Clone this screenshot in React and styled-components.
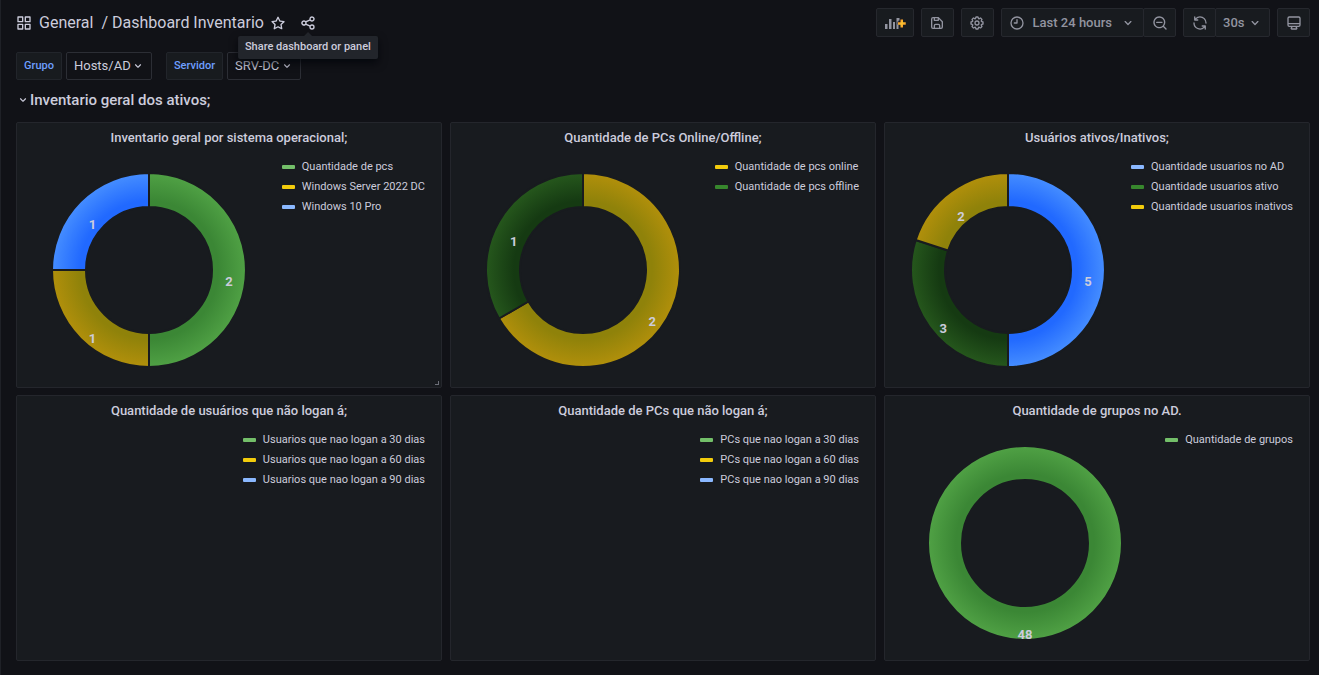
import React from "react";
import styled, { createGlobalStyle } from "styled-components";

const ICONS = {
  apps: "M10,13H3a1,1,0,0,0-1,1v7a1,1,0,0,0,1,1h7a1,1,0,0,0,1-1V14A1,1,0,0,0,10,13ZM9,20H4V15H9ZM21,2H14a1,1,0,0,0-1,1v7a1,1,0,0,0,1,1h7a1,1,0,0,0,1-1V3A1,1,0,0,0,21,2ZM20,9H15V4h5Zm1,4H14a1,1,0,0,0-1,1v7a1,1,0,0,0,1,1h7a1,1,0,0,0,1-1V14A1,1,0,0,0,21,13Zm-1,7H15V15h5ZM10,2H3A1,1,0,0,0,2,3v7a1,1,0,0,0,1,1h7a1,1,0,0,0,1-1V3A1,1,0,0,0,10,2ZM9,9H4V4H9Z",
  angleDown: "M17,9.17a1,1,0,0,0-1.41,0L12,12.71,8.46,9.17a1,1,0,0,0-1.41,0,1,1,0,0,0,0,1.42l4.24,4.24a1,1,0,0,0,1.42,0L17,10.59A1,1,0,0,0,17,9.17Z",
  clock: "M11,11H8a1,1,0,0,0,0,2h4a1,1,0,0,0,1-1V7a1,1,0,0,0-2,0Zm1-9A10,10,0,1,0,22,12,10,10,0,0,0,12,2Zm0,18a8,8,0,1,1,8-8A8,8,0,0,1,12,20Z",
  zoomOut: "M21.71,20.29,18,16.61A9,9,0,1,0,16.61,18l3.68,3.68a1,1,0,0,0,1.42,0A1,1,0,0,0,21.71,20.29ZM11,18a7,7,0,1,1,7-7A7,7,0,0,1,11,18Zm4-8H7a1,1,0,0,0,0,2h8a1,1,0,0,0,0-2Z",
  sync: "M19.91,15.51H15.38a1,1,0,0,0,0,2h2.4A8,8,0,0,1,4,12a1,1,0,0,0-2,0,10,10,0,0,0,16.88,7.23V21a1,1,0,0,0,2,0V16.5A1,1,0,0,0,19.91,15.51ZM12,2A10,10,0,0,0,5.12,4.77V3a1,1,0,0,0-2,0V7.5a1,1,0,0,0,1,1h4.5a1,1,0,0,0,0-2H6.22A8,8,0,0,1,20,12a1,1,0,0,0,2,0A10,10,0,0,0,12,2Z",
  monitor: "M19,2H5A3,3,0,0,0,2,5V15a3,3,0,0,0,3,3H7.64l-.58,1a2,2,0,0,0,0,2,2,2,0,0,0,1.75,1h6.46A2,2,0,0,0,17,21a2,2,0,0,0,0-2l-.59-1H19a3,3,0,0,0,3-3V5A3,3,0,0,0,19,2ZM8.77,20,10,18H14l1.2,2ZM20,15a1,1,0,0,1-1,1H5a1,1,0,0,1-1-1V14H20Zm0-3H4V5A1,1,0,0,1,5,4H19a1,1,0,0,1,1,1Z",
  save: "M20.71,9.29l-6-6a1,1,0,0,0-.32-.21A1.09,1.09,0,0,0,14,3H6A3,3,0,0,0,3,6V18a3,3,0,0,0,3,3H18a3,3,0,0,0,3-3V10A1,1,0,0,0,20.71,9.29ZM9,5h4V7H9Zm6,14H9V16a1,1,0,0,1,1-1h4a1,1,0,0,1,1,1Zm4-1a1,1,0,0,1-1,1H17V16a3,3,0,0,0-3-3H10a3,3,0,0,0-3,3v3H6a1,1,0,0,1-1-1V6A1,1,0,0,1,6,5H7V8A1,1,0,0,0,8,9h6a1,1,0,0,0,1-1V6.41l4,4Z",
  share: "M18,14a4,4,0,0,0-3.08,1.48l-5.1-2.35a3.64,3.64,0,0,0,0-2.26l5.1-2.35A4,4,0,1,0,14,6a4.17,4.17,0,0,0,.07.71L8.79,9.14a4,4,0,1,0,0,5.72l5.28,2.43A4.17,4.17,0,0,0,14,18a4,4,0,1,0,4-4ZM18,4a2,2,0,1,1-2,2A2,2,0,0,1,18,4ZM6,14a2,2,0,1,1,2-2A2,2,0,0,1,6,14Zm12,6a2,2,0,1,1,2-2A2,2,0,0,1,18,20Z",
  star: "M22,9.67A1,1,0,0,0,21.14,9l-5.69-.83L12.9,3a1,1,0,0,0-1.8,0L8.55,8.16,2.86,9a1,1,0,0,0-.81.68,1,1,0,0,0,.25,1l4.13,4-1,5.68A1,1,0,0,0,6.9,21.44L12,18.77l5.1,2.67a.93.93,0,0,0,.46.12,1,1,0,0,0,.59-.19,1,1,0,0,0,.4-1l-1-5.68,4.13-4A1,1,0,0,0,22,9.67Zm-6.15,4a1,1,0,0,0-.29.88l.72,4.2-3.76-2a1.06,1.06,0,0,0-.94,0l-3.76,2,.72-4.2a1,1,0,0,0-.29-.88l-3-3,4.21-.61a1,1,0,0,0,.76-.55L12,5.7l1.88,3.82a1,1,0,0,0,.76.55l4.21.61Z",
  cog: "M21.32,9.55l-1.89-.63.89-1.78A1,1,0,0,0,20.13,6L18,3.87a1,1,0,0,0-1.15-.19l-1.78.89-.63-1.89A1,1,0,0,0,13.5,2h-3a1,1,0,0,0-.95.68L8.92,4.57,7.14,3.68A1,1,0,0,0,6,3.87L3.87,6a1,1,0,0,0-.19,1.15l.89,1.78-1.89.63A1,1,0,0,0,2,10.5v3a1,1,0,0,0,.68.95l1.89.63-.89,1.78A1,1,0,0,0,3.87,18L6,20.13a1,1,0,0,0,1.15.19l1.78-.89.63,1.89a1,1,0,0,0,.95.68h3a1,1,0,0,0,.95-.68l.63-1.89,1.78.89A1,1,0,0,0,18,20.13L20.13,18a1,1,0,0,0,.19-1.15l-.89-1.78,1.89-.63A1,1,0,0,0,22,13.5v-3A1,1,0,0,0,21.32,9.55ZM20,12.78l-1.2.4A2,2,0,0,0,17.64,16l.57,1.14-1.1,1.1L16,17.64a2,2,0,0,0-2.79,1.16l-.4,1.2H11.22l-.4-1.2A2,2,0,0,0,8,17.64l-1.14.57-1.1-1.1L6.36,16A2,2,0,0,0,5.2,13.18L4,12.78V11.22l1.2-.4A2,2,0,0,0,6.36,8L5.79,6.89l1.1-1.1L8,6.36A2,2,0,0,0,10.82,5.2l.4-1.2h1.56l.4,1.2A2,2,0,0,0,16,6.36l1.14-.57,1.1,1.1L17.64,8a2,2,0,0,0,1.16,2.79l1.2.4ZM12,8a4,4,0,1,0,4,4A4,4,0,0,0,12,8Zm0,6a2,2,0,1,1,2-2A2,2,0,0,1,12,14Z",
};

// inner / outer stops of each slice gradient, and the legend colour
const COLORS = {
  green: { inner: "#3b8735", outer: "#4fa044", key: "#73bf69" },
  yellow: { inner: "#8f820a", outer: "#b08f0b", key: "#f2cc0c" },
  blue: { inner: "#2169ff", outer: "#448cff", key: "#8ab8ff" },
  darkGreen: { inner: "#153a12", outer: "#25561c", key: "#37872d" },
};

const PANELS = [
  {
    title: "Inventario geral por sistema operacional;",
    resizable: true,
    items: [
      { label: "Quantidade de pcs", color: "green", value: 2 },
      { label: "Windows Server 2022 DC", color: "yellow", value: 1 },
      { label: "Windows 10 Pro", color: "blue", value: 1 },
    ],
  },
  {
    title: "Quantidade de PCs Online/Offline;",
    items: [
      { label: "Quantidade de pcs online", color: "yellow", value: 2 },
      { label: "Quantidade de pcs offline", color: "darkGreen", value: 1 },
    ],
  },
  {
    title: "Usuários ativos/Inativos;",
    items: [
      { label: "Quantidade usuarios no AD", color: "blue", value: 5 },
      { label: "Quantidade usuarios ativo", color: "darkGreen", value: 3 },
      { label: "Quantidade usuarios inativos", color: "yellow", value: 2 },
    ],
  },
  {
    title: "Quantidade de usuários que não logan á;",
    items: [
      { label: "Usuarios que nao logan a 30 dias", color: "green", value: 0 },
      { label: "Usuarios que nao logan a 60 dias", color: "yellow", value: 0 },
      { label: "Usuarios que nao logan a 90 dias", color: "blue", value: 0 },
    ],
  },
  {
    title: "Quantidade de PCs que não logan á;",
    items: [
      { label: "PCs que nao logan a 30 dias", color: "green", value: 0 },
      { label: "PCs que nao logan a 60 dias", color: "yellow", value: 0 },
      { label: "PCs que nao logan a 90 dias", color: "blue", value: 0 },
    ],
  },
  {
    title: "Quantidade de grupos no AD.",
    items: [{ label: "Quantidade de grupos", color: "green", value: 48 }],
  },
];

const OUTER = 96;
const INNER = 64;

const Icon = ({ name, size = 16 }) => (
  <svg width={size} height={size} viewBox="0 0 24 24" fill="currentColor" aria-hidden="true">
    <path d={ICONS[name]} />
  </svg>
);

const AddPanelIcon = () => (
  <svg width="22" height="16" viewBox="0 0 22 16" aria-hidden="true">
    <defs>
      <linearGradient id="plus" x1="0" y1="0" x2="1" y2="1">
        <stop offset="0" stopColor="#f4792b" />
        <stop offset="0.5" stopColor="#fbc62f" />
        <stop offset="1" stopColor="#f4792b" />
      </linearGradient>
    </defs>
    <g fill="currentColor">
      <rect x="1" y="9" width="2.500" height="5" />
      <rect x="5" y="4" width="2.500" height="10" />
      <rect x="9" y="7" width="2" height="7" />
      <path d="M12.500 3h3v2.500h-1v1h-1v3h1v4.500h-2z" />
    </g>
    <path d="M16.500 4.500h2.500v2.750h2.750v2.500h-2.750v2.750h-2.500v-2.750h-2.500v-2.500h2.500z" fill="url(#plus)" />
  </svg>
);

const point = (r, a) => [r * Math.sin(a), -r * Math.cos(a)];

// the panel-coloured stroke eats one unit off every edge, so the arcs are drawn one unit larger
const slicePath = (start, end) => {
  const outer = OUTER + 1;
  const inner = INNER - 1;
  const large = end - start > Math.PI ? 1 : 0;
  const [x1, y1] = point(outer, start);
  const [x2, y2] = point(outer, end);
  const [x3, y3] = point(inner, end);
  const [x4, y4] = point(inner, start);
  return `M${x1},${y1}A${outer},${outer},0,${large},1,${x2},${y2}L${x3},${y3}A${inner},${inner},0,${large},0,${x4},${y4}Z`;
};

const Donut = ({ id, items }) => {
  const total = items.reduce((sum, item) => sum + item.value, 0);
  if (!total) return null;

  let angle = 0;
  const slices = items.map((item) => {
    const start = angle;
    angle += (item.value / total) * Math.PI * 2;
    return { ...item, start, end: angle };
  });

  return (
    <DonutSvg viewBox="-96 -96 192 192" role="img" aria-label={items.map((i) => i.label).join(", ")}>
      <defs>
        {slices.map(({ color }) => (
          <radialGradient key={color} id={`${id}-${color}`} gradientUnits="userSpaceOnUse" cx="0" cy="0" r={OUTER}>
            <stop offset="0.72" stopColor={COLORS[color].inner} />
            <stop offset="1" stopColor={COLORS[color].outer} />
          </radialGradient>
        ))}
      </defs>
      {slices.length === 1 ? (
        <circle r={(OUTER + INNER) / 2} fill="none" stroke={`url(#${id}-${slices[0].color})`} strokeWidth={OUTER - INNER} />
      ) : (
        slices.map((s) => (
          <path key={s.label} d={slicePath(s.start, s.end)} fill={`url(#${id}-${s.color})`} stroke="#181b1f" strokeWidth="2" strokeLinejoin="round" />
        ))
      )}
      {slices.map((s) => {
        const [x, y] = point((OUTER + INNER) / 2, (s.start + s.end) / 2);
        return (
          <text key={s.label} x={x} y={y + 16} textAnchor="middle">
            {s.value}
          </text>
        );
      })}
    </DonutSvg>
  );
};

const Variable = ({ id, label, value }) => (
  <VariableGroup>
    <VariableLabel htmlFor={id}>{label}</VariableLabel>
    <SelectBox>
      <VariableSelect id={id}>
        <option>{value}</option>
      </VariableSelect>
      <Icon name="angleDown" size={14} />
    </SelectBox>
  </VariableGroup>
);

const App = () => {
  return (
    <Page>
      <GlobalStyle />
      <TopBar>
        <Crumbs>
          <Icon name="apps" />
          <a href="#general">General</a>
          <span>/</span>
          <a href="#dashboard">Dashboard Inventario</a>
        </Crumbs>
        <TitleActions>
          <PlainButton aria-label="Mark as favorite">
            <Icon name="star" />
          </PlainButton>
          <ShareBox>
            <PlainButton aria-label="Share dashboard or panel">
              <Icon name="share" />
            </PlainButton>
            <Tooltip role="tooltip">Share dashboard or panel</Tooltip>
          </ShareBox>
        </TitleActions>
        <Toolbar>
          <ToolButton $wide aria-label="Add panel">
            <AddPanelIcon />
          </ToolButton>
          <ToolButton aria-label="Save dashboard">
            <Icon name="save" />
          </ToolButton>
          <ToolButton aria-label="Dashboard settings">
            <Icon name="cog" />
          </ToolButton>
          <ButtonGroup>
            <ToolButton $text>
              <Icon name="clock" />
              <span>Last 24 hours</span>
              <Icon name="angleDown" />
            </ToolButton>
            <ToolButton aria-label="Zoom out time range">
              <Icon name="zoomOut" />
            </ToolButton>
          </ButtonGroup>
          <ButtonGroup>
            <ToolButton aria-label="Refresh dashboard">
              <Icon name="sync" />
            </ToolButton>
            <SelectBox>
              <IntervalSelect aria-label="Refresh interval">
                <option>30s</option>
              </IntervalSelect>
              <Icon name="angleDown" />
            </SelectBox>
          </ButtonGroup>
          <ToolButton aria-label="Cycle view mode">
            <Icon name="monitor" />
          </ToolButton>
        </Toolbar>
      </TopBar>

      <Variables>
        <Variable id="grupo" label="Grupo" value="Hosts/AD" />
        <Variable id="servidor" label="Servidor" value="SRV-DC" />
      </Variables>

      <RowTitle>
        <button>
          <Icon name="angleDown" size={14} />
          Inventario geral dos ativos;
        </button>
      </RowTitle>

      <Grid>
        {PANELS.map((panel, i) => (
          <Panel key={panel.title}>
            <h2>{panel.title}</h2>
            <PanelBody>
              <Chart>
                <Donut id={`pie${i}`} items={panel.items} />
              </Chart>
              <Legend>
                {panel.items.map((item) => (
                  <LegendItem key={item.label} $color={COLORS[item.color].key}>
                    {item.label}
                  </LegendItem>
                ))}
              </Legend>
            </PanelBody>
            {panel.resizable && <ResizeHandle />}
          </Panel>
        ))}
      </Grid>
    </Page>
  );
};

const GlobalStyle = createGlobalStyle`
  * {
    box-sizing: border-box;
  }
  body {
    margin: 0;
    background: #111217;
    color: #ccccdc;
    font-family: Roboto, "Liberation Sans", sans-serif;
    font-size: 13px;
  }
  button, select {
    font: inherit;
    color: inherit;
    cursor: pointer;
  }
  a {
    color: inherit;
    text-decoration: none;
  }
  svg {
    display: block;
    flex-shrink: 0;
  }
`;

const Page = styled.div`
  min-height: 100vh;
  padding: 8px 9px 13px 15px;
  border-left: 1px solid #1f2127;
`;

const TopBar = styled.header`
  display: flex;
  align-items: center;
`;

const Crumbs = styled.nav`
  display: flex;
  align-items: center;
  gap: 8px;
  font-size: 16px;

  span {
    margin-right: -4px;
  }

  svg {
    margin-right: -1px;
  }
`;

const TitleActions = styled.div`
  display: flex;
  gap: 14px;
  margin-left: 6px;
`;

const PlainButton = styled.button`
  display: flex;
  padding: 0;
  border: 0;
  background: none;
`;

const ShareBox = styled.div`
  position: relative;
`;

const Tooltip = styled.div`
  position: absolute;
  z-index: 1;
  top: 21px;
  left: 50%;
  transform: translateX(-50%);
  padding: 3px 7px 5px;
  border-radius: 2px;
  background: #22252b;
  box-shadow: 0 4px 8px rgba(1, 4, 9, 0.75);
  font-size: 11px;
  font-weight: 500;
  line-height: 15px;
  white-space: nowrap;

  &::before {
    content: "";
    position: absolute;
    top: -4px;
    left: calc(50% - 4px);
    border: 4px solid transparent;
    border-top: 0;
    border-bottom-color: #22252b;
  }
`;

const Toolbar = styled.div`
  display: flex;
  gap: 7px;
  margin-left: auto;
  color: #9294a0;
`;

const ToolButton = styled.button`
  display: flex;
  align-items: center;
  justify-content: center;
  gap: 8px;
  width: ${({ $wide, $text }) => ($text ? "auto" : $wide ? "38px" : "33px")};
  height: 29px;
  padding: 0 ${({ $text }) => ($text ? "7px" : "0")};
  border: 1px solid #26282e;
  border-radius: 2px;
  background: #181b1f;
  font-weight: 500;
`;

const ButtonGroup = styled.div`
  display: flex;

  > * + * {
    margin-left: -1px;
  }
`;

const SelectBox = styled.div`
  display: grid;
  align-items: center;

  > * {
    grid-area: 1 / 1;
  }

  svg {
    justify-self: end;
    margin-right: 7px;
    pointer-events: none;
  }
`;

const IntervalSelect = styled.select`
  appearance: none;
  height: 29px;
  padding: 0 24px 0 7px;
  border: 1px solid #26282e;
  border-radius: 2px;
  background: #181b1f;
  font-weight: 500;
`;

const Variables = styled.div`
  display: flex;
  gap: 14px;
  margin-top: 15px;
`;

const VariableGroup = styled.div`
  display: flex;
  gap: 4px;
`;

const VariableLabel = styled.label`
  display: flex;
  align-items: center;
  height: 28px;
  padding: 0 7px 2px;
  border: 1px solid #22252b;
  border-radius: 2px;
  background: #181b1f;
  color: #6e9fff;
  font-size: 11px;
  font-weight: 500;
`;

const VariableSelect = styled.select`
  appearance: none;
  height: 28px;
  padding: 0 20px 2px 7px;
  border: 1px solid #2c2e35;
  border-radius: 2px;
  background: #111217;
`;

const RowTitle = styled.h1`
  margin: 10px 0 12px;
  font-size: 15px;
  font-weight: 500;
  line-height: 20px;

  button {
    display: flex;
    align-items: center;
    padding: 0;
    border: 0;
    background: none;
  }
`;

const Grid = styled.main`
  display: grid;
  grid-template-columns: repeat(3, minmax(0, 1fr));
  gap: 7px 8px;
`;

const Panel = styled.section`
  position: relative;
  display: flex;
  flex-direction: column;
  min-height: 266px;
  border: 1px solid #24262c;
  border-radius: 2px;
  background: #181b1f;

  h2 {
    margin: 0;
    font-size: 13px;
    font-weight: 500;
    line-height: 29px;
    text-align: center;
  }
`;

const PanelBody = styled.div`
  display: flex;
  flex: 1;
  gap: 8px;
  padding: 0 16px 0 8px;
`;

const Chart = styled.div`
  display: flex;
  flex: 1;
  min-width: 0;
  align-items: center;
  justify-content: center;
`;

const DonutSvg = styled.svg`
  width: 100%;
  max-width: 192px;
  overflow: visible;

  text {
    fill: #ccccdc;
    font-size: 13px;
    font-weight: 700;
  }
`;

const Legend = styled.ul`
  margin: 5px 0 0;
  padding: 0;
  list-style: none;
`;

const LegendItem = styled.li`
  display: flex;
  align-items: center;
  gap: 7px;
  font-size: 11px;
  line-height: 20px;
  white-space: nowrap;

  &::before {
    content: "";
    width: 13px;
    height: 4px;
    border-radius: 1px;
    background: ${({ $color }) => $color};
  }
`;

const ResizeHandle = styled.span`
  position: absolute;
  right: 2px;
  bottom: 2px;
  width: 4px;
  height: 4px;
  border-right: 1px solid #6c6e78;
  border-bottom: 1px solid #6c6e78;
`;

export default App;
